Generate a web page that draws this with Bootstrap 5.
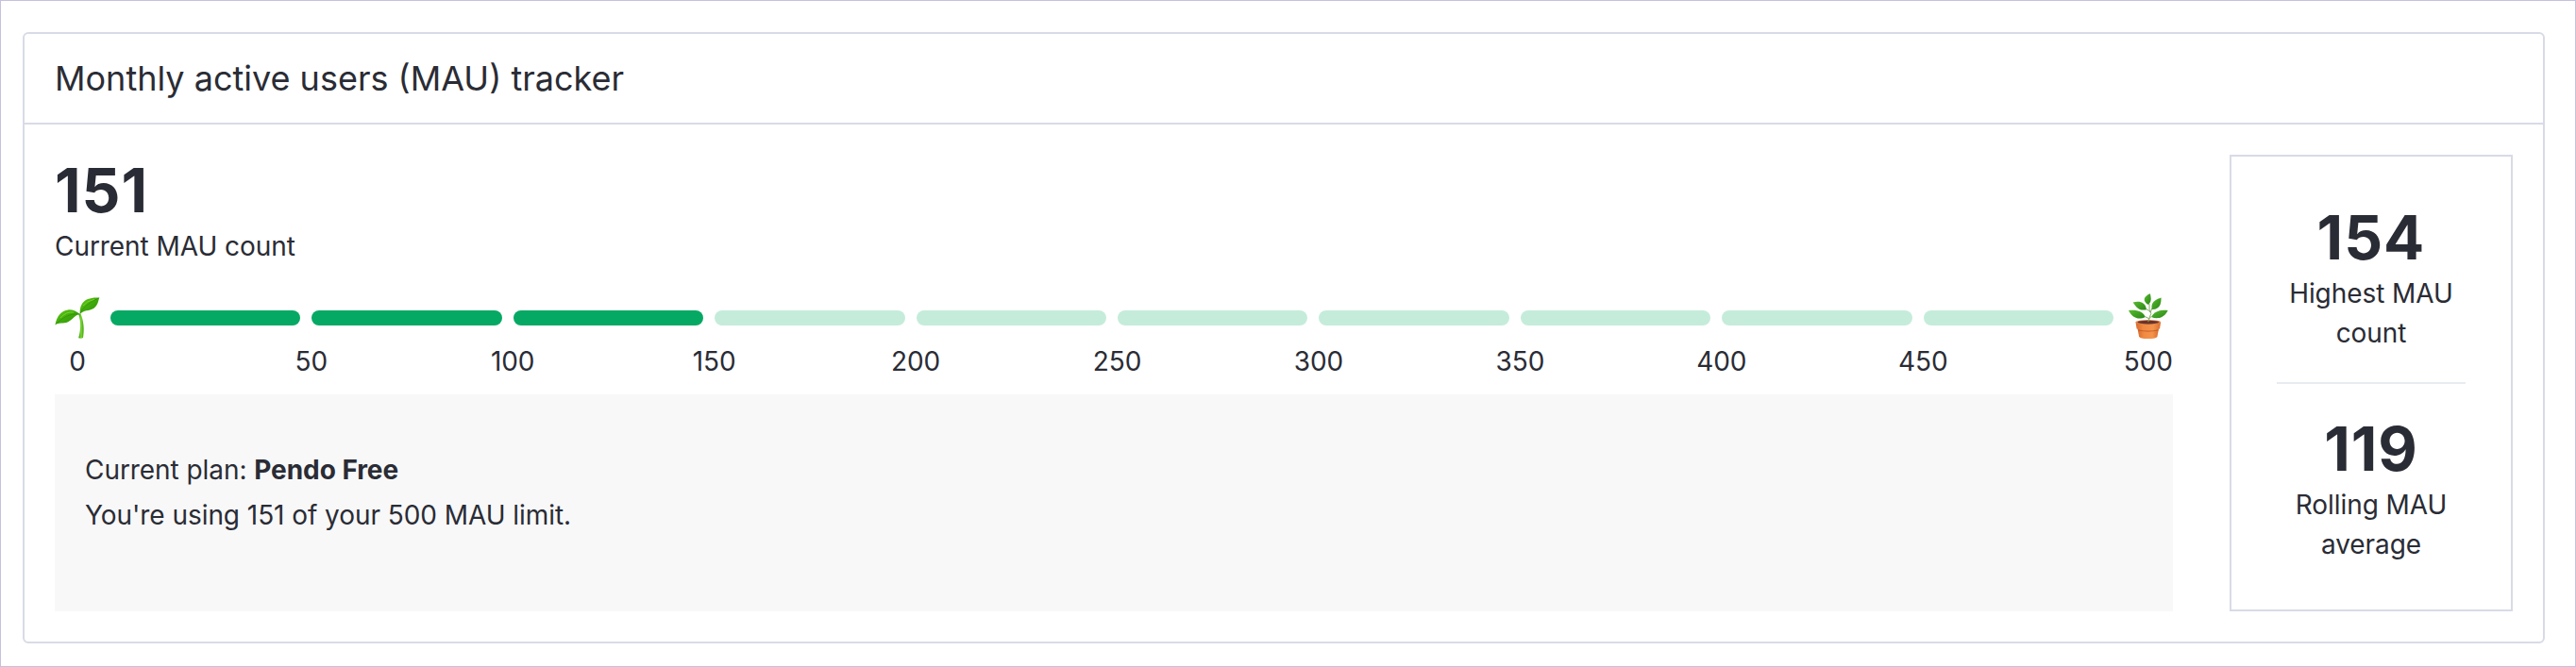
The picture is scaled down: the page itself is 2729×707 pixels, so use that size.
<!DOCTYPE html>
<html lang="en">
<head>
    <meta charset="UTF-8">
    <title>Monthly active users (MAU) tracker</title>
    <link href="https://cdn.jsdelivr.net/npm/bootstrap@5.3.2/dist/css/bootstrap.min.css" rel="stylesheet">
    <style>
        body {
            font-family: Inter, "Liberation Sans", sans-serif;
            font-size: 28px;
            line-height: 42px;
            letter-spacing: -.06px;
            color: #2a2c35;
        }
        .page-frame {
            height: 707px;
            border: 1px solid #c5c0dc;
            padding: 33px 32px 24px 23px;
        }
        .tracker {
            border: 2px solid #d8dbe6;
            border-radius: 6px;
        }
        .tracker-header {
            padding: 20px 32px;
            border-bottom: 2px solid #d8dbe6;
            background: #fff;
        }
        .tracker-title {
            font-size: 36px;
            line-height: 54px;
            font-weight: 400;
            letter-spacing: 0;
        }
        .tracker-body {
            padding: 32px;
            gap: 60px;
        }
        .stat-number {
            font-size: 64px;
            line-height: 76px;
            font-weight: 700;
            letter-spacing: 1px;
        }
        .track {
            height: 48px;
            margin-top: 31px;
        }
        .plant-icon {
            width: 48px;
            height: 48px;
            flex: none;
            overflow: visible;
        }
        .segments {
            gap: 12px;
            margin: 0 15px 0 11px;
        }
        .segment {
            height: 16px;
            background: #c5ecdb;
        }
        .segment.filled { background: #05a963; }
        .tick-labels { margin: 1px 0 14px; }
        .tick-first { width: 48px; margin-right: 117px; }
        .tick-last { width: 158px; }
        .tick { flex: 1 1 0; }
        .plan-box {
            background: #f8f8f8;
            padding: 56px 32px 0;
            line-height: 48px;
        }
        .stats-box {
            width: 300px;
            border: 2px solid #d8dbe6;
            padding: 48px;
        }
        .stats-rule {
            height: 2px;
            margin: 31px 0;
            background: #e8ebf0;
        }
    </style>
</head>
<body>
    <div class="page-frame">
        <div class="tracker h-100 d-flex flex-column">
            <div class="tracker-header rounded-top">
                <h1 class="tracker-title mb-0">Monthly active users (MAU) tracker</h1>
            </div>
            <div class="tracker-body d-flex flex-grow-1">
                <div class="d-flex flex-column flex-grow-1">
                    <div class="stat-number">151</div>
                    <div>Current MAU count</div>

                    <!-- Progress -->
                    <div class="track d-flex align-items-center">
                        <svg class="plant-icon" viewBox="0 0 48 48">
                            <defs>
                                <linearGradient id="leaf" x1="0" y1="0" x2="1" y2="1">
                                    <stop offset="0" stop-color="#67cf18"/>
                                    <stop offset=".5" stop-color="#3fa90c"/>
                                    <stop offset="1" stop-color="#318f08"/>
                                </linearGradient>
                                <linearGradient id="stem">
                                    <stop offset="0" stop-color="#2f8d06"/>
                                    <stop offset=".5" stop-color="#7cdb35"/>
                                    <stop offset="1" stop-color="#3b9d0b"/>
                                </linearGradient>
                            </defs>
                            <path d="M25.2 19.5 L27.5 19.5 C31 28 31.2 37 30 45 Q28 46.4 25.2 45.3 C27.6 37 28 28 25.2 19.5Z" fill="url(#stem)"/>
                            <path d="M.4 31.5 C2 22 7 16.3 14 15.4 C19 15 23 17 26.5 20 C21 21 20 25 14 28.3 C9 30.5 4 28.6 .4 31.5Z" fill="url(#leaf)"/>
                            <path d="M26.8 20 C26.2 12 29 6.5 35 4 C39 2.4 43 2.1 47.4 2.6 C45.8 6 46 10.5 41.5 13.7 C36 17.3 31 15 26.8 20Z" fill="url(#leaf)"/>
                            <path d="M1.5 30.3 C8 24 16 18.8 26 20 M27 19 C31 11.5 38 7 46.5 3" fill="none" stroke="#2f8a08" stroke-width=".6"/>
                            <path d="M6 24 Q12 17 20 18 M30 11 Q34 6 42 4.3" fill="none" stroke="#82df38" stroke-width=".7"/>
                        </svg>
                        <div class="segments d-flex flex-grow-1" id="segments"></div>
                        <svg class="plant-icon" viewBox="0 2 48 48">
                            <defs>
                                <linearGradient id="pot">
                                    <stop offset="0" stop-color="#d76a2e"/>
                                    <stop offset=".3" stop-color="#f08a42"/>
                                    <stop offset=".7" stop-color="#f4944c"/>
                                    <stop offset="1" stop-color="#d96c30"/>
                                </linearGradient>
                                <linearGradient id="pottedLeaf" x1="0" y1="0" x2="1" y2="1">
                                    <stop offset="0" stop-color="#56bd2c"/>
                                    <stop offset="1" stop-color="#2b8419"/>
                                </linearGradient>
                            </defs>
                            <path d="M10.5 37 H33 L31.5 45.4 Q30.7 48 21.7 48 Q13 48 12 45.4Z" fill="url(#pot)"/>
                            <path d="M10.7 38.2 Q21.8 41 32.8 38.2 L32.6 39.6 Q21.8 41.8 11 39.6Z" fill="#b95221" opacity=".65"/>
                            <path d="M8.5 30.4 L9.6 37.4 Q21.8 40.4 34 37.4 L35.1 30.4Z" fill="url(#pot)"/>
                            <ellipse cx="21.8" cy="30.4" rx="13.3" ry="2.5" fill="#e28147"/>
                            <ellipse cx="21.8" cy="30.6" rx="11.3" ry="1.8" fill="#67342d"/>
                            <path d="M21.8 30.2 Q22.7 26 24.8 21.5 Q22.3 18 23 11 M18.5 24.8 Q22 25.2 22.4 27.5 M25 24.7 Q23 25.5 22.4 28 M20 16.8 Q22.5 17.5 24 20 M25.7 16 L24.3 20" fill="none" stroke="#87ad68" stroke-width="1"/>
                            <g fill="url(#pottedLeaf)">
                                <path d="M23.9 .3 C17.3 3 15 8 21.9 12 C26 8.5 24.7 4.5 23.9 .3Z"/>
                                <path d="M5.7 9.5 C12 7.5 19 9 20 17.2 C12 18.8 9.5 15.2 5.7 9.5Z"/>
                                <path d="M35.5 4.6 C28 7 24.5 10.5 25.7 17 C33.5 17.5 35.8 11 35.5 4.6Z"/>
                                <path d="M1 18 C9 17 16.5 18.6 18.7 25 C11.5 28.5 5 26 1 18Z"/>
                                <path d="M42.7 18 C34 17 28.5 19 25 25 C32 28 39 25.5 42.7 18Z"/>
                            </g>
                        </svg>
                    </div>
                    <div class="tick-labels d-flex text-center">
                        <div class="tick-first">0</div>
                        <div class="tick">50</div>
                        <div class="tick">100</div>
                        <div class="tick">150</div>
                        <div class="tick">200</div>
                        <div class="tick">250</div>
                        <div class="tick">300</div>
                        <div class="tick">350</div>
                        <div class="tick">400</div>
                        <div class="tick">450</div>
                        <div class="tick-last text-end">500</div>
                    </div>

                    <!-- Plan -->
                    <div class="plan-box flex-grow-1">
                        <div>Current plan: <strong>Pendo Free</strong></div>
                        <div>You're using 151 of your 500 MAU limit.</div>
                    </div>
                </div>

                <!-- Side stats -->
                <div class="stats-box flex-shrink-0 text-center">
                    <div class="stat-number">154</div>
                    <div>Highest MAU count</div>
                    <div class="stats-rule"></div>
                    <div class="stat-number">119</div>
                    <div>Rolling MAU average</div>
                </div>
            </div>
        </div>
    </div>

<script src="https://cdn.jsdelivr.net/npm/bootstrap@5.3.2/dist/js/bootstrap.bundle.min.js"></script>
<script>
const current = 151;
const limit = 500;
const step = 50;
const segments = document.getElementById('segments');
for (let value = step; value <= limit; value += step) {
    const segment = document.createElement('div');
    segment.className = 'segment rounded-pill flex-fill';
    if (value <= current) segment.classList.add('filled');
    segments.appendChild(segment);
}
</script>
</body>
</html>
